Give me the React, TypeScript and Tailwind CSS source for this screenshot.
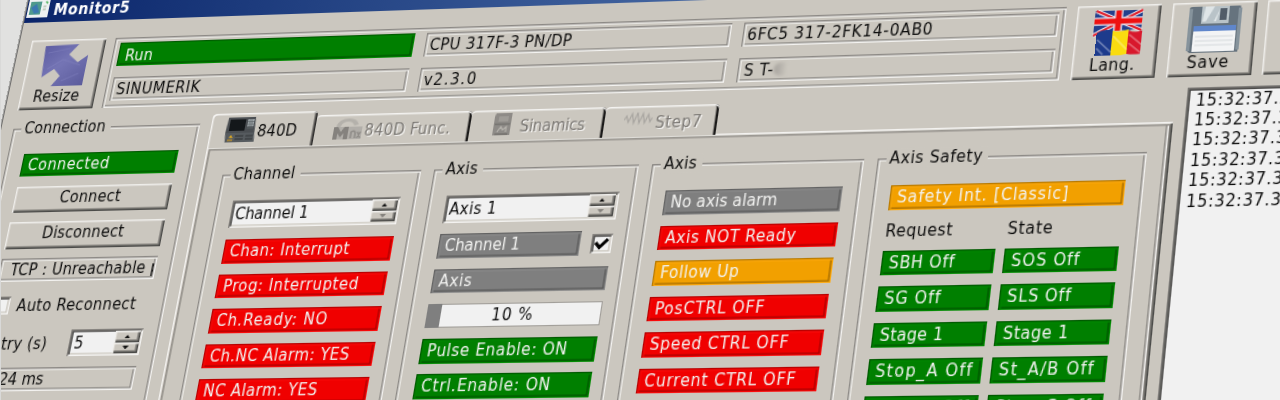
import React, { useLayoutEffect, useRef } from 'react';

/* Perspective in which the whole window is shown. */
const PLANE =
  'matrix3d(0.998623,-0.0349885,0,-0.0000573826,-0.216571,0.997702,0,-0.0000998992,0,0,1,0,24,23,0,1)';

/** Text spaced out to an exact width, like the hinted system font. */
function T({ children, w, className = '' }: { children: string; w?: number; className?: string }) {
  const ref = useRef<HTMLSpanElement>(null);
  useLayoutEffect(() => {
    const el = ref.current;
    if (!el || !w) return;
    el.style.letterSpacing = '0px';
    const natural = el.offsetWidth;
    el.style.letterSpacing = `${(w - natural) / children.length}px`;
  }, [children, w]);
  return (
    <span ref={ref} className={'inline-block whitespace-pre ' + className}>
      {children}
    </span>
  );
}

const ETCH =
  'shadow-[inset_1.4px_1.4px_0_#8d8a86,inset_-1.4px_-1.4px_0_#f4f3f1,inset_2.8px_2.8px_0_#f0efec,inset_-2.8px_-2.8px_0_#8d8a86]';
const RAISED =
  'shadow-[inset_1.4px_1.4px_0_#efeeeb,inset_-1.4px_-1.4px_0_#4a4a48,inset_-2.8px_-2.8px_0_#8b8883]';
const SUNKEN =
  'shadow-[inset_1.4px_1.4px_0_#86837f,inset_-1.4px_-1.4px_0_#f4f3f1,inset_2.8px_2.8px_0_#4c4b4a,inset_-2.8px_-2.8px_0_#cbc7bf]';

const TONES = {
  red: 'bg-[#f00000] shadow-[inset_1.3px_1.3px_0_#b80000,inset_-1.3px_-1.3px_0_#fc0a0a,inset_2.4px_2.4px_0_#fa0a0a,inset_-2.6px_-2.6px_0_#a80000]',
  green:
    'bg-[#007f00] shadow-[inset_1.3px_1.3px_0_#005a00,inset_-1.3px_-1.3px_0_#008a00,inset_2.4px_2.4px_0_#008700,inset_-2.6px_-2.6px_0_#005200]',
  gray: 'bg-[#7f7f7f] shadow-[inset_1.3px_1.3px_0_#636363,inset_-1.3px_-1.3px_0_#8a8a8a,inset_2.4px_2.4px_0_#8c8c8c,inset_-2.6px_-2.6px_0_#585858]',
  orange:
    'bg-[#f2a000] shadow-[inset_1.3px_1.3px_0_#b97a00,inset_-1.3px_-1.3px_0_#ffa90a,inset_2.4px_2.4px_0_#fba80c,inset_-2.6px_-2.6px_0_#a26b00]',
};
type Tone = keyof typeof TONES;

function Badge({ tone, w, children, className = '' }: { tone: Tone; w?: number; children: string; className?: string }) {
  return (
    <div className={`h-[22.5px] pl-[6.5px] leading-[23px] text-[#f2f2f0] ${TONES[tone]} ${className}`}>
      <T w={w}>{children}</T>
    </div>
  );
}

function Field({ w, children, className = '' }: { w?: number; children: string; className?: string }) {
  return (
    <div className={`h-[23px] overflow-hidden pl-[4.5px] leading-[25px] ${ETCH} ${className}`}>
      <T w={w}>{children}</T>
    </div>
  );
}

function Group({ title, tw, className = '', children }: { title: string; tw: number; className?: string; children: React.ReactNode }) {
  return (
    <div className={`h-[330px] shrink-0 ${ETCH} ${className}`}>
      <div className="-mt-[9px] mb-[16.5px] flex h-[18px] pl-[8px] leading-[19px]">
        <span className="bg-[#cbc7bf] pr-[5px] pl-[3px]">
          <T w={tw}>{title}</T>
        </span>
      </div>
      {children}
    </div>
  );
}

function Stepper({ faded }: { faded?: boolean }) {
  return (
    <div className="flex w-[24px] flex-col">
      <div className={`flex flex-1 items-center justify-center bg-[#cbc7bf] ${RAISED}`}>
        <svg width="6" height="3.5" viewBox="0 0 7 4"><path d="M0 4L3.5 0L7 4Z" fill="#111" /></svg>
      </div>
      <div className={`flex flex-1 items-center justify-center bg-[#cbc7bf] ${RAISED}`}>
        <svg width="6" height="3.5" viewBox="0 0 7 4"><path d="M0 0L3.5 4L7 0Z" fill={faded ? '#85827d' : '#111'} /></svg>
      </div>
    </div>
  );
}

function Spin({ w, children, faded, className = '' }: { w?: number; children: string; faded?: boolean; className?: string }) {
  return (
    <div className={`flex h-[25.5px] justify-between bg-[#f1f1f1] p-[2.4px] pl-[5px] leading-[22.5px] ${SUNKEN} ${className}`}>
      <T w={w}>{children}</T>
      <Stepper faded={faded} />
    </div>
  );
}

function ToolButton({ label, w, children }: { label: string; w: number; children?: React.ReactNode }) {
  return (
    <div className={`flex h-[69px] w-[74.3px] shrink-0 flex-col items-center pt-[4.5px] ${RAISED}`}>
      <div className="h-[43px] w-[44px]">{children}</div>
      <T w={w} className="mr-[3px] leading-[19px]">{label}</T>
    </div>
  );
}

function ResizeIcon() {
  return (
    <svg width="44" height="43" viewBox="0 0 44 43">
      <defs>
        <linearGradient id="rz" x1="0" y1="0" x2="1" y2="1">
          <stop offset="0" stopColor="#5d5da2" />
          <stop offset=".45" stopColor="#7474b4" />
          <stop offset="1" stopColor="#5c5c9c" />
        </linearGradient>
      </defs>
      <path d="M0 2L33 1L25 11L35 19L44 12V42L13 42L20 32L13 25L2 33Z" fill="url(#rz)" />
      <path d="M4 9L25 5M6 25L20 16L38 22M22 37L38 30" stroke="#8484c0" strokeWidth="1.2" fill="none" opacity=".5" />
    </svg>
  );
}

function FlagsIcon() {
  return (
    <svg width="44" height="43" viewBox="0 0 44 43">
      <path d="M1 1H43V21L38 19L30 20L22 19L10 22L1 25Z" fill="#233f8c" />
      <path d="M2 1L43 20M43 1L1 24" stroke="#eef0f6" strokeWidth="4" />
      <path d="M2 1L43 20M43 1L1 24" stroke="#e0202c" strokeWidth="2" />
      <path d="M22 1V20M1 11H43" stroke="#e8e8f4" strokeWidth="7.5" />
      <path d="M22 1V20M1 11H43" stroke="#ee1111" strokeWidth="5" />
      <path d="M4 22Q10 17 18 20V43H4Z" fill="#1d3b8c" />
      <path d="M18 20Q24 22 32 19V42Q24 44 18 43Z" fill="#fadc10" />
      <path d="M32 20Q38 23 45 20V42Q38 43 32 42Z" fill="#d8182c" />
      <path d="M5 28L18 40M5 36L11 42M19 25L32 38M33 24L45 34M33 32L44 41" stroke="#fff" strokeWidth="1.6" opacity=".35" />
    </svg>
  );
}

function FloppyIcon() {
  return (
    <svg width="46" height="43" viewBox="0 0 46 43">
      <path d="M2 0H44Q45 0 45 2V43H3L0 40V2Q0 0 2 0Z" fill="#66737e" />
      <path d="M0 2H3V41H0ZM43 2H46V41H43Z" fill="#86939c" />
      <path d="M11 0H35V16H11Z" fill="#b9c3c8" />
      <path d="M14 0L22 0L15 14H12ZM27 2L24 14H22Z" fill="#dfe5e7" />
      <path d="M27 2H33V13H27Z" fill="#515c68" />
      <path d="M5 18H42V24H5Z" fill="#5f86cb" />
      <path d="M5 23H42V42H5Z" fill="#f3f4f5" />
      <path d="M7 28H40M7 32H40M7 36H40" stroke="#d5d9dc" strokeWidth="1" />
    </svg>
  );
}

function CncIcon() {
  return (
    <svg width="29" height="24" viewBox="0 0 29 24">
      <path d="M1 0H27L28 15H0Z" fill="#4a4e52" />
      <path d="M3 2H18V13H3Z" fill="#14171a" />
      <path d="M20 2H26V9H20Z" fill="#a9b0b4" />
      <path d="M20 10.5H26M22 2V9M24 2V9M20 4.5H26M20 7H26" stroke="#5d6468" strokeWidth=".8" />
      <path d="M0 15H28L29 24H1Z" fill="#565b5f" />
      <path d="M4 19.5L6 17L8 20Z" fill="#e8b020" />
      <path d="M10 18H18M10 21H18M20 18H27M20 21H27" stroke="#3c4043" strokeWidth="1.4" />
      <path d="M3 22H8" stroke="#d09a20" strokeWidth="1.2" />
    </svg>
  );
}

function McIcon() {
  return (
    <svg width="28" height="21" viewBox="0 0 28 21">
      <path d="M3 9Q4 1 14 1Q22 1 24 7L20 8Q18 4 14 4Q8 4 7 9Z" fill="#b4b1ab" />
      <path d="M1 9H28V21H1Z" fill="#b1aea9" />
      <path d="M1 21V9H5L8 14L11 9H15V21H11V15L8 19L5 15V21Z" fill="#85827e" />
      <path d="M18 20V14Q21 12 22 15V20M24 14L27 20M27 14L24 20" stroke="#8f8c88" strokeWidth="1.5" fill="none" />
    </svg>
  );
}

function DriveIcon() {
  return (
    <svg width="18" height="22" viewBox="0 0 18 22">
      <path d="M2 0H17V21H1V3Z" fill="#8e8b87" />
      <path d="M5 3H14V8H5Z" fill="#9f9c97" />
      <path d="M2 10.5H16M3 20H15" stroke="#75736f" strokeWidth="1.5" />
      <path d="M5 18L8 13L10 16L13 13V18" stroke="#b4b1ab" strokeWidth="1.3" fill="none" />
    </svg>
  );
}

function WaveIcon() {
  return (
    <svg width="26" height="13" viewBox="0 0 26 13">
      <path d="M0 8L2 4L4 10L7 2L9 11L12 1L14 11L17 2L19 11L22 3L24 10L26 6" stroke="#aaa7a2" strokeWidth="1.2" fill="none" />
    </svg>
  );
}

function Tab({ label, w, active, className = '', textClass = '', icon }: { label: string; w: number; active?: boolean; className?: string; textClass?: string; icon: React.ReactNode }) {
  return (
    <div
      className={`flex shrink-0 items-start rounded-t-[4px] bg-[#cbc7bf] ${
        active
          ? 'h-[33px] shadow-[inset_1.4px_1.4px_0_#f4f3f1,inset_-1.6px_0_0_#2c2b2a,inset_-3px_0_0_#8b8883]'
          : 'h-[29px] text-[#7c7975] shadow-[inset_0_1.4px_0_#f4f3f1,inset_-2px_0_0_#1c1b1a,inset_-3px_0_0_#8b8883] [text-shadow:1.2px_1.2px_0_#f4f3f1]'
      } ${className}`}
    >
      {icon}
      <T w={w} className={`leading-[18px] ${textClass}`}>{label}</T>
    </div>
  );
}

const CHANNEL: [string, number][] = [
  ['Chan: Interrupt', 113],
  ['Prog: Interrupted', 128],
  ['Ch.Ready: NO', 105],
  ['Ch.NC Alarm: YES', 131],
  ['NC Alarm: YES', 107],
  ['Drive Ready: NO', 112],
];
const AXIS: [string, number, Tone][] = [
  ['No axis alarm', 97, 'gray'],
  ['Axis NOT Ready', 118, 'red'],
  ['Follow Up', 71, 'orange'],
  ['PosCTRL OFF', 99, 'red'],
  ['Speed CTRL OFF', 124, 'red'],
  ['Current CTRL OFF', 135, 'red'],
  ['Parked', 52, 'gray'],
];
const SAFETY: [string, number, string, number][] = [
  ['SBH Off', 58, 'SOS Off', 60],
  ['SG Off', 50, 'SLS Off', 55],
  ['Stage 1', 56, 'Stage 1', 57],
  ['Stop_A Off', 85, 'St_A/B Off', 82],
  ['Stop_C Off', 85, 'Stop_C Off', 82],
];
const LOG = ['15:32:37.345', '15:32:37.345', '15:32:37.346', '15:32:37.346', '15:32:37.347', '15:32:37.347'];

export default function App() {
  return (
    <div className="h-[400px] w-[1280px] overflow-hidden border-l border-[#d9d9d8] bg-[#e1e1e0]">
      <div
        className="-ml-px flex h-0 w-[1500px] items-start origin-top-left font-['DejaVu_Sans_Condensed','DejaVu_Sans',sans-serif] text-[15.5px] text-[#0c0c0c] [font-stretch:condensed]"
        style={{ transform: PLANE }}
      >
        <div className="-mt-[27px] h-[560px] w-[1500px] shrink-0 bg-[#cbc7bf] shadow-[-1.4px_0_0_#6f6e6d]">
          {/* title bar */}
          <div className="flex h-[27px] items-start bg-linear-to-r from-[#0a246a] to-[#9dc0ea] pl-[1px]">
            <svg className="mt-[3px]" width="21" height="19" viewBox="0 0 21 19">
              <path d="M0 0H21V19H0Z" fill="#eef1f2" />
              <path d="M2 3H13V16H2Z" fill="#4f9a8c" />
              <path d="M3 9L8 5L12 14L7 15Z" fill="#3b78b0" />
              <path d="M15 8H18M15 11H18" stroke="#b7c2b0" strokeWidth="1.5" />
              <path d="M17 3L19 5" stroke="#3fae4c" strokeWidth="1.5" />
            </svg>
            <T w={76} className="mt-[6px] ml-[5px] leading-[18px] font-bold text-white">Monitor5</T>
          </div>

          {/* tool row */}
          <div className="flex h-[70px] items-start pl-[12px]">
            <div className="flex pt-[17.5px]">
              <ToolButton label="Resize" w={46}><ResizeIcon /></ToolButton>
              <div className={`ml-[9px] grid h-[69px] w-[891px] shrink-0 grid-cols-3 content-start gap-x-[11px] gap-y-[11px] px-[6px] pt-[5px] ${ETCH}`}>
                <div className={`h-[23.5px] pl-[6.5px] leading-[26px] text-[#f2f2f0] ${TONES.green}`}><T w={28}>Run</T></div>
                <Field w={134}>CPU 317F-3 PN/DP</Field>
                <Field w={169}>6FC5 317-2FK14-0AB0</Field>
                <Field w={82}>SINUMERIK</Field>
                <Field w={51}>v2.3.0</Field>
                <div className={`flex h-[23px] pl-[6px] leading-[25px] ${ETCH}`}>
                  <T w={27}>S T-</T>
                  <span className="mt-[5px] h-[13px] w-[12px] rounded-l-full bg-linear-to-r from-[#8b8884] to-[#cbc7bf] opacity-60 blur-[1.5px]" />
                </div>
              </div>
              <div className="ml-[9.5px] flex gap-[9.5px]">
                <ToolButton label="Lang." w={40}><FlagsIcon /></ToolButton>
                <ToolButton label="Save" w={37}><FloppyIcon /></ToolButton>
                <ToolButton label="" w={0} />
              </div>
            </div>
          </div>

          {/* body */}
          <div className="flex items-start pl-[12px]">
            <Group title="Connection" tw={80} className="mt-[35px] w-[182.5px]">
              <div className="-mt-[1px] flex flex-col gap-[9.5px] px-[15.5px]">
                <Badge tone="green" w={80} className="h-[21px] leading-[20px]">Connected</Badge>
                <div className={`h-[25px] pr-[3px] text-center leading-[22.5px] ${RAISED}`}><T w={60}>Connect</T></div>
                <div className={`h-[25.5px] pr-[3px] text-center leading-[23.5px] ${RAISED}`}><T w={79}>Disconnect</T></div>
                <div className={`flex h-[21.5px] overflow-hidden pl-[11px] leading-[22px] ${ETCH}`}>
                  <div className="w-[138px] overflow-hidden"><T w={145}>TCP : Unreachable p</T></div>
                </div>
                <div className="mt-[5px] flex h-[17px] items-center gap-[7.5px]">
                  <div className={`h-[17px] w-[17px] bg-[#f1f1f1] ${SUNKEN}`} />
                  <T w={115} className="leading-[20px]">Auto Reconnect</T>
                </div>
                <div className="mt-[5.5px] flex h-[25px] items-center justify-between">
                  <T w={63} className="-ml-[1px] pt-[2px]">Retry (s)</T>
                  <Spin className="h-[25px] w-[69px]">5</Spin>
                </div>
                <div className={`flex h-[22.5px] pl-[22px] leading-[23.5px] ${ETCH}`}><T w={43}>24 ms</T></div>
              </div>
            </Group>

            <div className="mt-[26px] ml-[11.5px] w-[883.5px] shrink-0">
              <div className="flex h-[33px] items-start">
                <Tab active label="840D" w={38} className="w-[100.8px] pl-[14.5px]" textClass="mt-[8.5px] ml-[2px]" icon={<div className="mt-[4px] h-[24px] w-[29px]"><CncIcon /></div>} />
                <Tab label="840D Func." w={82} className="mt-[3.5px] w-[147.3px] pl-[17.5px]" textClass="mt-[7px] ml-[2px]" icon={<div className="mt-[3px] h-[21px] w-[28px]"><McIcon /></div>} />
                <Tab label="Sinamics" w={61} className="mt-[3.5px] w-[125px] pl-[20.5px]" textClass="mt-[7px] ml-[8px]" icon={<div className="mt-[3px] h-[22px] w-[18px]"><DriveIcon /></div>} />
                <Tab label="Step7" w={43} className="mt-[3.5px] w-[104px] pl-[18px]" textClass="mt-[7px] ml-[3px]" icon={<div className="mt-[5px] h-[13px] w-[26px]"><WaveIcon /></div>} />
              </div>
              <div className="-mt-[1px] flex h-[400px] items-start gap-[12px] pt-[26.5px] pl-[19.5px] shadow-[inset_1.4px_1.4px_0_#f4f3f1,inset_-1.5px_-1.5px_0_#4a4a48,inset_2.2px_2.2px_0_#cbc7bf,inset_-3px_-3px_0_#8b8883,inset_3.6px_3.6px_0_#8b8883,inset_-4.4px_-4.4px_0_#f4f3f1,inset_-5.8px_-5.8px_0_#8b8883]">
                <Group title="Channel" tw={59} className="w-[189.5px]">
                  <div className="flex flex-col gap-[10.1px] px-[15px]">
                    <Spin w={70} faded className="mb-[1.5px]">Channel 1</Spin>
                    {CHANNEL.map(([t, w]) => <Badge key={t} tone="red" w={w}>{t}</Badge>)}
                  </div>
                </Group>
                <Group title="Axis" tw={30} className="w-[189.5px]">
                  <div className="flex flex-col gap-[9.9px] pr-[14px] pl-[15.5px]">
                    <Spin w={44} faded className="mb-[1px]">Axis 1</Spin>
                    <div className="flex items-center justify-between">
                      <Badge tone="gray" w={70} className="w-[131px]">Channel 1</Badge>
                      <div className={`flex h-[18px] w-[19px] items-center justify-center bg-[#f1f1f1] ${SUNKEN}`}>
                        <svg width="13" height="12" viewBox="0 0 13 12"><path d="M1 5L5 9.5L12 2" fill="none" stroke="#000" strokeWidth="3" /></svg>
                      </div>
                    </div>
                    <Badge tone="gray" w={31}>Axis</Badge>
                    <div className="flex h-[22px] items-stretch bg-[#f1f1f1] text-center leading-[23px] shadow-[inset_1px_1px_0_#a19e99,inset_-1px_-1px_0_#a19e99]">
                      <div className="w-[13px] bg-[#7f7f7f]" />
                      <div className="flex-1 pr-[14px]"><T w={38}>10 %</T></div>
                    </div>
                    <Badge tone="green" w={128}>Pulse Enable: ON</Badge>
                    <Badge tone="green" w={118}>Ctrl.Enable: ON</Badge>
                    <Badge tone="green" w={100}>Enable: ON</Badge>
                  </div>
                </Group>
                <Group title="Axis" tw={30} className="ml-[0.5px] w-[191.5px]">
                  <div className="flex flex-col gap-[10.1px] px-[15.5px]">
                    {AXIS.map(([t, w, tone]) => <Badge key={t} tone={tone} w={w}>{t}</Badge>)}
                  </div>
                </Group>
                <Group title="Axis Safety" tw={83} className="w-[237px]">
                  <div className="px-[15.5px]">
                    <Badge tone="orange" w={151}>Safety Int. [Classic]</Badge>
                    <div className="mt-[8.5px] mb-[6.5px] grid h-[22px] grid-cols-2 gap-[9px] leading-[22px]">
                      <div><T w={60}>Request</T></div>
                      <div><T w={40}>State</T></div>
                    </div>
                    <div className="grid grid-cols-2 gap-x-[8.7px] gap-y-[10.1px]">
                      {SAFETY.map(([a, aw, b, bw]) => (
                        <React.Fragment key={a}>
                          <Badge tone="green" w={aw}>{a}</Badge>
                          <Badge tone="green" w={bw}>{b}</Badge>
                        </React.Fragment>
                      ))}
                    </div>
                  </div>
                </Group>
              </div>
            </div>

            <div className="mt-[26.5px] ml-[10.5px] flex h-[430px] w-[300px] shrink-0 flex-col bg-[#f1f1f1] pt-[3px] pl-[8px] leading-[18.4px] shadow-[inset_1.4px_1.4px_0_#7c7a77,inset_2.9px_2.9px_0_#4c4b4a]">
              {LOG.map((t, i) => <div key={i}><T w={101}>{t}</T></div>)}
            </div>
          </div>
        </div>
      </div>
    </div>
  );
}
